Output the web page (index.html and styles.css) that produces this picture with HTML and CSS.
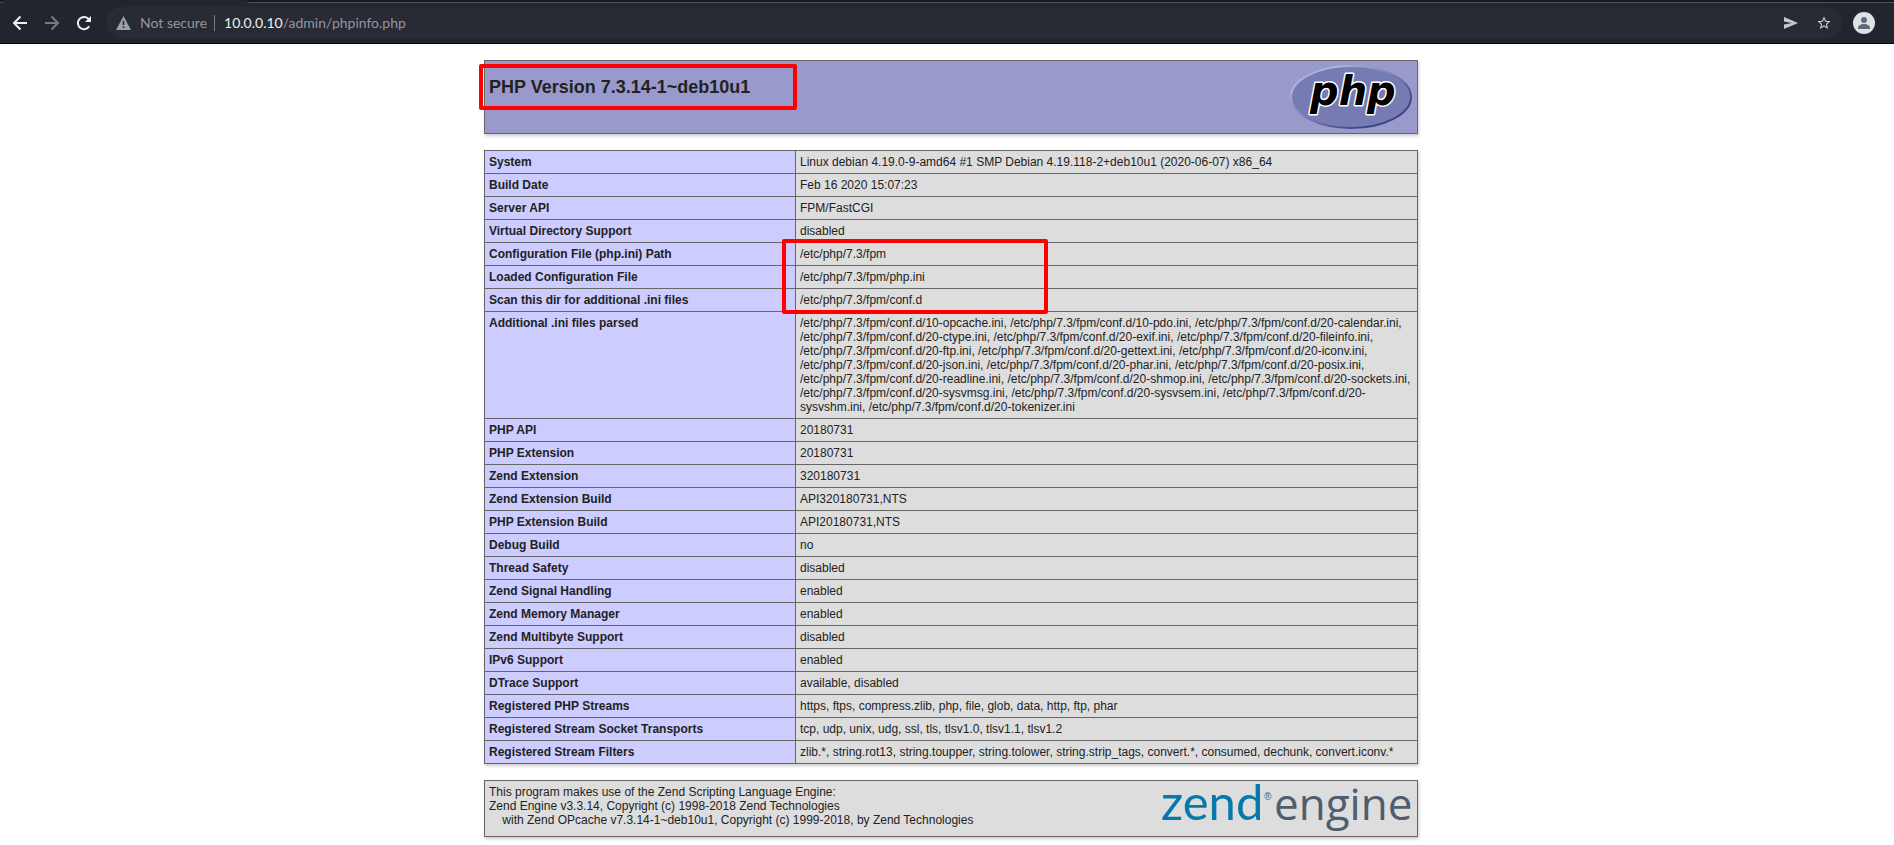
FILE: index.html
```
<!DOCTYPE html>
<html lang="en">

<head>
    <meta charset="UTF-8">
    <meta name="viewport" content="width=device-width, initial-scale=1.0">
    <title>phpinfo()</title>
    <link rel="stylesheet" href="styles.css">
</head>

<body>
    <header class="browser">
        <div class="tabstrip">
            <div class="tab-edge"></div>
            <div class="tab"></div>
            <div class="tab-rest"></div>
        </div>
        <div class="toolbar">
            <button class="nav-button" type="button" aria-label="Back">
                <svg width="16" height="16" viewBox="0 0 16 16"><path d="M15 8H2.500M8.500 1.500L2 8l6.500 6.500" /></svg>
            </button>
            <button class="nav-button disabled" type="button" aria-label="Forward">
                <svg width="16" height="16" viewBox="0 0 16 16"><path d="M1 8h12.500M7.500 1.500L14 8l-6.500 6.500" /></svg>
            </button>
            <button class="nav-button" type="button" aria-label="Reload">
                <svg width="16" height="16" viewBox="0 0 16 16"><path d="M13.200 11.200A6.100 6.100 0 1 1 12.300 3.700L13.500 5" /><path class="solid" d="M15 1v6H9z" /></svg>
            </button>
            <div class="omnibox">
                <svg class="warn" width="15" height="14" viewBox="0 0 15 14"><path fill="#9aa0a6" d="M7.500 0L15 14H0z" /><path fill="#282a34" d="M6.700 5h1.600v4H6.700zM6.700 10.300h1.600v1.700H6.700z" /></svg>
                <span class="not-secure">Not secure</span>
                <span class="divider"></span>
                <span class="url"><b>10.0.0.10</b>/admin/phpinfo.php</span>
                <button class="box-button send" type="button" aria-label="Share">
                    <svg width="14" height="12" viewBox="0 0 14 12"><path fill="#c8c8c8" d="M0 0l14 6L0 12V7.500L8 6 0 4.500z" /></svg>
                </button>
                <button class="box-button" type="button" aria-label="Bookmark">
                    <svg width="16" height="16" viewBox="0 0 24 24"><path fill="#d0d0d0" d="M22 9.240l-7.190-.62L12 2 9.190 8.630 2 9.240l5.460 4.730L5.820 21 12 17.270 18.180 21l-1.630-7.030L22 9.240zM12 15.400l-3.760 2.270 1-4.280-3.320-2.880 4.380-.38L12 6.100l1.710 4.040 4.380.38-3.320 2.880 1 4.280L12 15.400z" /></svg>
                </button>
            </div>
            <button class="profile" type="button" aria-label="Profile">
                <svg width="22" height="22" viewBox="0 0 22 22"><circle cx="11" cy="11" r="11" fill="#dee1e6" /><circle cx="11" cy="7.900" r="3" fill="#5f6b7a" /><path fill="#5f6b7a" d="M5 17v-1.500c0-2.300 3.500-3.500 6-3.500s6 1.200 6 3.500V17z" /></svg>
            </button>
        </div>
    </header>

    <main class="center">
        <div class="box h">
            <h1 class="p">PHP Version 7.3.14-1~deb10u1</h1>
            <svg class="php-logo" width="122" height="64" viewBox="0 0 122 64">
                <defs>
                    <linearGradient id="rim" x1="0" y1="0" x2="1" y2="1">
                        <stop offset="0.200" stop-color="#aab4d8" />
                        <stop offset="0.500" stop-color="#777bb3" />
                        <stop offset="0.800" stop-color="#3d4385" />
                    </linearGradient>
                </defs>
                <ellipse cx="61" cy="32" rx="60" ry="31" fill="#777bb3" stroke="url(#rim)" stroke-width="2" />
                <text x="20" y="40">php</text>
            </svg>
            <div class="mark mark-version"></div>
        </div>

        <table class="box">
            <tbody>
                <tr><th class="e" scope="row">System</th><td class="v">Linux debian 4.19.0-9-amd64 #1 SMP Debian 4.19.118-2+deb10u1 (2020-06-07) x86_64</td></tr>
                <tr><th class="e" scope="row">Build Date</th><td class="v">Feb 16 2020 15:07:23</td></tr>
                <tr><th class="e" scope="row">Server API</th><td class="v">FPM/FastCGI</td></tr>
                <tr><th class="e" scope="row">Virtual Directory Support</th><td class="v">disabled</td></tr>
                <tr><th class="e" scope="row">Configuration File (php.ini) Path</th><td class="v marked">/etc/php/7.3/fpm<div class="mark mark-paths"></div></td></tr>
                <tr><th class="e" scope="row">Loaded Configuration File</th><td class="v">/etc/php/7.3/fpm/php.ini</td></tr>
                <tr><th class="e" scope="row">Scan this dir for additional .ini files</th><td class="v">/etc/php/7.3/fpm/conf.d</td></tr>
                <tr><th class="e" scope="row">Additional .ini files parsed</th><td class="v">/etc/php/7.3/fpm/conf.d/10-opcache.ini, /etc/php/7.3/fpm/conf.d/10-pdo.ini, /etc/php/7.3/fpm/conf.d/20-calendar.ini, /etc/php/7.3/fpm/conf.d/20-ctype.ini, /etc/php/7.3/fpm/conf.d/20-exif.ini, /etc/php/7.3/fpm/conf.d/20-fileinfo.ini, /etc/php/7.3/fpm/conf.d/20-ftp.ini, /etc/php/7.3/fpm/conf.d/20-gettext.ini, /etc/php/7.3/fpm/conf.d/20-iconv.ini, /etc/php/7.3/fpm/conf.d/20-json.ini, /etc/php/7.3/fpm/conf.d/20-phar.ini, /etc/php/7.3/fpm/conf.d/20-posix.ini, /etc/php/7.3/fpm/conf.d/20-readline.ini, /etc/php/7.3/fpm/conf.d/20-shmop.ini, /etc/php/7.3/fpm/conf.d/20-sockets.ini, /etc/php/7.3/fpm/conf.d/20-sysvmsg.ini, /etc/php/7.3/fpm/conf.d/20-sysvsem.ini, /etc/php/7.3/fpm/conf.d/20-sysvshm.ini, /etc/php/7.3/fpm/conf.d/20-tokenizer.ini</td></tr>
                <tr><th class="e" scope="row">PHP API</th><td class="v">20180731</td></tr>
                <tr><th class="e" scope="row">PHP Extension</th><td class="v">20180731</td></tr>
                <tr><th class="e" scope="row">Zend Extension</th><td class="v">320180731</td></tr>
                <tr><th class="e" scope="row">Zend Extension Build</th><td class="v">API320180731,NTS</td></tr>
                <tr><th class="e" scope="row">PHP Extension Build</th><td class="v">API20180731,NTS</td></tr>
                <tr><th class="e" scope="row">Debug Build</th><td class="v">no</td></tr>
                <tr><th class="e" scope="row">Thread Safety</th><td class="v">disabled</td></tr>
                <tr><th class="e" scope="row">Zend Signal Handling</th><td class="v">enabled</td></tr>
                <tr><th class="e" scope="row">Zend Memory Manager</th><td class="v">enabled</td></tr>
                <tr><th class="e" scope="row">Zend Multibyte Support</th><td class="v">disabled</td></tr>
                <tr><th class="e" scope="row">IPv6 Support</th><td class="v">enabled</td></tr>
                <tr><th class="e" scope="row">DTrace Support</th><td class="v">available, disabled</td></tr>
                <tr><th class="e" scope="row">Registered PHP Streams</th><td class="v">https, ftps, compress.zlib, php, file, glob, data, http, ftp, phar</td></tr>
                <tr><th class="e" scope="row">Registered Stream Socket Transports</th><td class="v">tcp, udp, unix, udg, ssl, tls, tlsv1.0, tlsv1.1, tlsv1.2</td></tr>
                <tr><th class="e" scope="row">Registered Stream Filters</th><td class="v">zlib.*, string.rot13, string.toupper, string.tolower, string.strip_tags, convert.*, consumed, dechunk, convert.iconv.*</td></tr>
            </tbody>
        </table>

        <div class="box zend">
            <p>This program makes use of the Zend Scripting Language Engine:<br>Zend Engine v3.3.14, Copyright (c) 1998-2018 Zend Technologies<br>&nbsp;&nbsp;&nbsp;&nbsp;with Zend OPcache v7.3.14-1~deb10u1, Copyright (c) 1999-2018, by Zend Technologies</p>
            <svg class="zend-logo" width="252" height="47" viewBox="0 0 252 47">
                <text class="zend-word" x="1" y="35">zend</text>
                <text class="reg" x="104" y="15">®</text>
                <text class="engine-word" x="114" y="35">engine</text>
            </svg>
        </div>
    </main>
</body>

</html>
```
FILE: styles.css
```
body {
    margin: 0;
    background-color: #fff;
    color: #222;
    font-family: "Liberation Sans", Arial, sans-serif;
    font-size: 12px;
    line-height: 14px;
}

button {
    padding: 0;
    border: none;
    background: none;
    cursor: pointer;
}

svg {
    flex: none;
    overflow: visible;
}

/* browser bar */
.browser {
    background-color: #22242e;
    border-bottom: 1px solid #000;
}

.tabstrip {
    display: flex;
    height: 3px;
}

.tab-edge {
    width: 4px;
    border-bottom: 1px solid #50525a;
    border-bottom-right-radius: 4px;
    background-color: #17181f;
}

.tab {
    width: 243px;
}

.tab-rest {
    flex: 1;
    border-bottom: 1px solid #50525a;
    border-bottom-left-radius: 4px;
    background-color: #17181f;
}

.toolbar {
    display: flex;
    align-items: center;
    gap: 16px;
    height: 40px;
    padding: 0 19px 0 12px;
}

.nav-button {
    display: flex;
}

.nav-button path {
    fill: none;
    stroke: #f1f1f1;
    stroke-width: 2;
}

.nav-button .solid {
    fill: #f1f1f1;
    stroke: none;
}

.disabled path {
    stroke: #777a7d;
}

.omnibox {
    display: flex;
    flex: 1;
    align-items: center;
    box-sizing: border-box;
    height: 32px;
    margin: 0 -5px 0 -2px;
    padding: 0 10px;
    border-radius: 16px;
    background-color: #282a34;
    color: #9297a0;
    font-family: Lato, sans-serif;
    font-size: 14px;
    line-height: 20px;
}

.not-secure {
    margin-left: 9px;
}

.divider {
    width: 1px;
    height: 16px;
    margin: 0 9px 0 7px;
    background-color: #777a82;
}

.url {
    flex: 1;
}

.url b {
    color: #f1f1f1;
    font-weight: normal;
}

.box-button {
    display: flex;
}

.send {
    margin-right: 18px;
}

.profile {
    display: flex;
}

/* phpinfo page */
.center {
    padding: 16px 0 0 8px;
}

.box {
    position: relative;
    width: 934px;
    box-sizing: border-box;
    margin: 0 auto 16px;
    box-shadow: 1px 2px 3px #ccc;
}

.h,
.zend {
    display: flex;
    justify-content: space-between;
    border: 1px solid #666;
    padding: 4px 5px 4px 4px;
}

.h {
    background-color: #99c;
}

.zend {
    background-color: #ddd;
    margin-bottom: 8px;
}

.p {
    margin: 12px 0;
    font-size: 18px;
    line-height: 21px;
}

.php-logo text {
    fill: #000;
    stroke: #fff;
    stroke-width: 3px;
    stroke-linejoin: round;
    paint-order: stroke;
    font: italic 700 40px "DejaVu Sans", sans-serif;
}

table {
    border-collapse: collapse;
}

th,
td {
    border: 1px solid #666;
    padding: 4px 5px 4px 4px;
    vertical-align: baseline;
    text-align: left;
}

.e {
    box-sizing: border-box;
    width: 311px;
    background-color: #ccf;
    font-weight: bold;
}

.v {
    background-color: #ddd;
    overflow-wrap: break-word;
}

.zend p {
    margin: 0;
}

.zend-word {
    fill: #0679aa;
    font: 49px Lato, sans-serif;
}

.reg {
    fill: #0679aa;
    font: 10px "Liberation Sans", sans-serif;
}

.engine-word {
    fill: #4f5d6f;
    font: 44px "Open Sans", sans-serif;
}

/* red marker frames */
.marked {
    position: relative;
}

.mark {
    position: absolute;
    border: 4px solid #f00;
    border-radius: 2px;
    box-sizing: border-box;
}

.mark-version {
    top: 3px;
    left: -6px;
    width: 318px;
    height: 46px;
}

.mark-paths {
    top: -4px;
    left: -14px;
    width: 266px;
    height: 75px;
    z-index: 1;
}
```
